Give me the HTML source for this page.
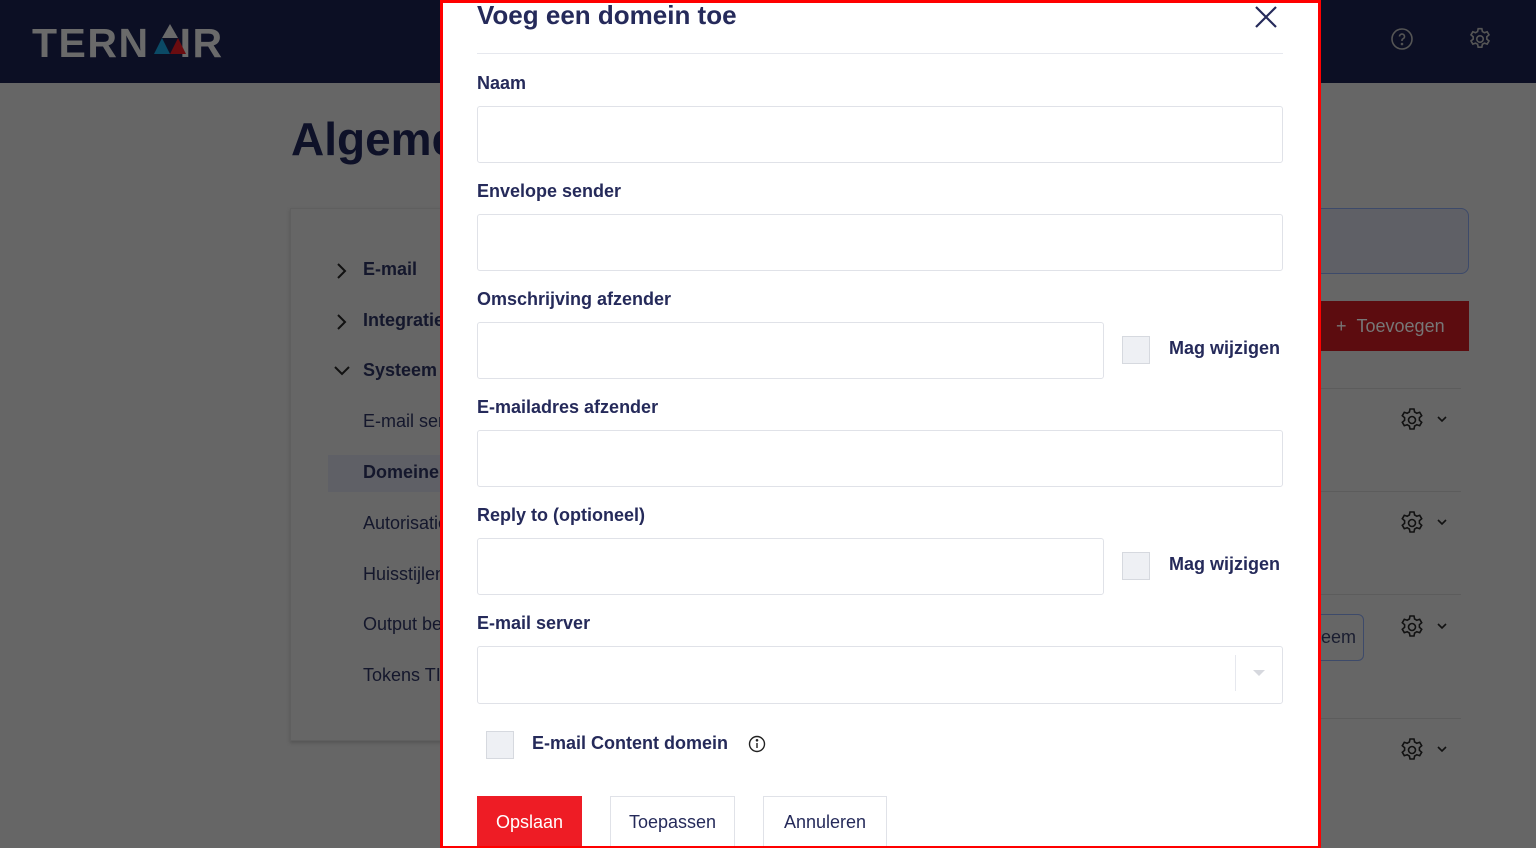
<!DOCTYPE html>
<html><head><meta charset="utf-8"><style>
*{margin:0;padding:0;box-sizing:border-box}
body{width:1536px;height:848px;overflow:hidden;background:#666;font-family:"Liberation Sans",sans-serif;position:relative}
.a{position:absolute}
.hdr{left:0;top:0;width:1536px;height:83px;background:#0c0f24}
.side{left:290px;top:208px;width:160px;height:533px;background:#666;border:1px solid #5f5f5f;box-shadow:0 2px 3px #555}
.st{font-size:18px;color:#14172c;white-space:nowrap}
.modal{left:440px;top:0;width:881px;height:848px;background:#fff;border:3px solid #f00;border-bottom-width:2px}
.lbl{font-size:18px;font-weight:bold;color:#252a5a;left:477px}
.in{border:1px solid #e0e2e8;border-radius:3px;background:#fff;height:57px}
.cb{width:28px;height:28px;background:#eef0f4;border:1px solid #d6d9df}
.btn{height:52px;font-size:18px;display:flex;align-items:center;justify-content:center;border:1px solid #e0e2e8;color:#252a5a}
.line{left:1321px;width:140px;height:1px;background:#5c5c5c}
</style></head><body>
<div class="a hdr"></div>
<div class="a" style="left:32px;top:20px;font-size:41px;font-weight:bold;color:#6a6a6a;letter-spacing:1.5px">TERN<span style="display:inline-block;width:30px"></span>IR</div>
<svg class="a" style="left:153px;top:22px" width="34" height="34" viewBox="0 0 34 34"><polygon points="17,2 9,16 25,16" fill="#6a6a6a"/><polygon points="9,16 1,32 17,32" fill="#0b4a66"/><polygon points="25,16 17,32 33,32" fill="#6a0c10"/></svg>
<svg class="a" style="left:1390px;top:27px" width="24" height="24" viewBox="0 0 24 24" fill="none" stroke="#555" stroke-width="1.6"><circle cx="12" cy="12" r="10"/><path d="M9.5 9.5a2.5 2.5 0 1 1 3.5 2.3c-.7.3-1 .8-1 1.5v.7"/><circle cx="12" cy="17" r=".5"/></svg>
<svg class="a" style="left:1467px;top:26px" width="26" height="26" viewBox="0 0 24 24" fill="none" stroke="#555" stroke-width="1.5"><circle cx="12" cy="12" r="3"/><path d="M10.3 2.5h3.4l.5 2.6 1.9 1.1 2.5-.9 1.7 2.9-2 1.7v2.2l2 1.7-1.7 2.9-2.5-.9-1.9 1.1-.5 2.6h-3.4l-.5-2.6-1.9-1.1-2.5.9-1.7-2.9 2-1.7v-2.2l-2-1.7 1.7-2.9 2.5.9 1.9-1.1z"/></svg>
<div class="a" style="left:291px;top:112px;font-size:46px;font-weight:bold;color:#0e1128">Algeme</div>
<div class="a side"></div>
<svg class="a" style="left:334px;top:262px" width="16" height="220" fill="none" stroke="#111" stroke-width="2"><path d="M4 2l7 7-7 7"/><path d="M4 53l7 7-7 7"/><path d="M1 105l7 7 7-7"/></svg>
<div class="a st" style="left:363px;top:259px;font-weight:bold">E-mail</div>
<div class="a st" style="left:363px;top:310px;font-weight:bold">Integratie</div>
<div class="a st" style="left:363px;top:360px;font-weight:bold">Systeem</div>
<div class="a st" style="left:363px;top:411px">E-mail server</div>
<div class="a" style="left:328px;top:455px;width:115px;height:37px;background:#5f6066"></div>
<div class="a st" style="left:363px;top:462px;font-weight:bold">Domeinen</div>
<div class="a st" style="left:363px;top:513px">Autorisatie</div>
<div class="a st" style="left:363px;top:564px">Huisstijlen</div>
<div class="a st" style="left:363px;top:614px">Output beheer</div>
<div class="a st" style="left:363px;top:665px">Tokens TI</div>
<div class="a" style="left:1300px;top:208px;width:169px;height:66px;border:1px solid #3d4a6a;border-radius:8px;background:#5f6066"></div>
<div class="a" style="left:1310px;top:301px;width:159px;height:50px;background:#5c0c0f;color:#777;font-size:18px;display:flex;align-items:center;padding-left:26px">+&nbsp;&nbsp;Toevoegen</div>
<div class="a line" style="top:388px"></div><div class="a line" style="top:491px"></div><div class="a line" style="top:594px"></div><div class="a line" style="top:718px"></div>
<div class="a" style="left:1300px;top:614px;width:64px;height:47px;border:1px solid #3d4a6a;border-radius:6px;color:#1a1d30;font-size:18px;padding:12px 0 0 20px">eem</div>
<svg class="a" style="left:1398px;top:406px" width="60" height="360" fill="none" stroke="#111" stroke-width="1.6">
<g id="g"><circle cx="14" cy="14" r="3.5"/><path d="M12 3h4l.6 3 2.2 1.3 2.9-1 2 3.4-2.3 2v2.6l2.3 2-2 3.4-2.9-1-2.2 1.3-.6 3h-4l-.6-3-2.2-1.3-2.9 1-2-3.4 2.3-2v-2.6l-2.3-2 2-3.4 2.9 1 2.2-1.3z"/><path d="M40 11l4 4 4-4"/></g>
<use href="#g" y="103"/><use href="#g" y="207"/><use href="#g" y="330"/></svg>

<div class="a modal"></div>
<div class="a" style="left:477px;top:0px;font-size:26px;font-weight:bold;color:#252a5a">Voeg een domein toe</div>
<svg class="a" style="left:1254px;top:5px" width="24" height="24" stroke="#252a5a" stroke-width="2.2"><path d="M2 2l20 20M22 2L2 22"/></svg>
<div class="a" style="left:477px;top:53px;width:806px;height:1px;background:#e6e8ee"></div>
<div class="a lbl" style="top:73px">Naam</div>
<div class="a in" style="left:477px;top:106px;width:806px"></div>
<div class="a lbl" style="top:181px">Envelope sender</div>
<div class="a in" style="left:477px;top:214px;width:806px"></div>
<div class="a lbl" style="top:289px">Omschrijving afzender</div>
<div class="a in" style="left:477px;top:322px;width:627px"></div>
<div class="a cb" style="left:1122px;top:336px"></div>
<div class="a lbl" style="left:1169px;top:338px">Mag wijzigen</div>
<div class="a lbl" style="top:397px">E-mailadres afzender</div>
<div class="a in" style="left:477px;top:430px;width:806px"></div>
<div class="a lbl" style="top:505px">Reply to (optioneel)</div>
<div class="a in" style="left:477px;top:538px;width:627px"></div>
<div class="a cb" style="left:1122px;top:552px"></div>
<div class="a lbl" style="left:1169px;top:554px">Mag wijzigen</div>
<div class="a lbl" style="top:613px">E-mail server</div>
<div class="a in" style="left:477px;top:646px;width:806px;height:58px"></div>
<div class="a" style="left:1235px;top:655px;width:1px;height:36px;background:#e6e8ee"></div>
<svg class="a" style="left:1253px;top:670px" width="12" height="7"><path d="M0 0h12L6 6z" fill="#d6d8de"/></svg>
<div class="a cb" style="left:486px;top:731px"></div>
<div class="a lbl" style="left:532px;top:733px">E-mail Content domein</div>
<svg class="a" style="left:748px;top:735px" width="18" height="18" fill="none" stroke="#222" stroke-width="1.4"><circle cx="9" cy="9" r="7.5"/><path d="M9 8v5"/><circle cx="9" cy="5.3" r=".6" fill="#222"/></svg>
<div class="a btn" style="left:477px;top:796px;width:105px;background:#ee1c25;border-color:#ee1c25;color:#fff">Opslaan</div>
<div class="a btn" style="left:610px;top:796px;width:125px">Toepassen</div>
<div class="a btn" style="left:763px;top:796px;width:124px">Annuleren</div>
<div class="a" style="left:440px;top:846px;width:881px;height:2px;background:#f00"></div>
</body></html>
